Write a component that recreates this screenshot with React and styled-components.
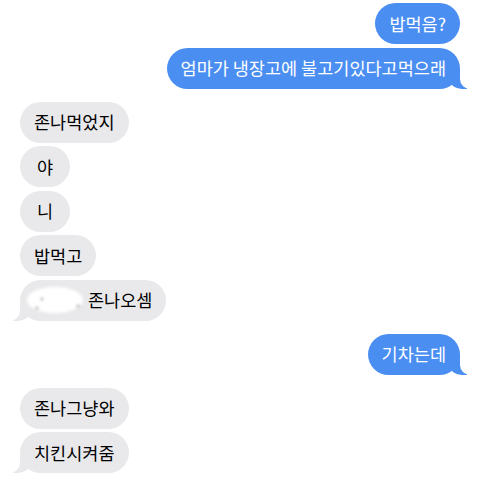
import styled, { createGlobalStyle, css } from "styled-components";

const GlobalStyle = createGlobalStyle`
  html, body {
    margin: 0;
    padding: 0;
    background: #ffffff;
  }
  body {
    font-family: "Noto Sans CJK KR", "Noto Sans", sans-serif;
  }
`;

const BLUE = "#4a8ef2";
const GRAY = "#e9e9eb";

const Thread = styled.div`
  width: 480px;
  height: 481px;
  box-sizing: border-box;
  padding: 3px 20px 0;
  display: flex;
  flex-direction: column;
  row-gap: 13px;
  overflow: hidden;
`;

const Group = styled.div`
  display: flex;
  flex-direction: column;
  align-items: ${(p) => (p.$mine ? "flex-end" : "flex-start")};
  row-gap: 3.5px;
`;

const tailMine = css`
  &::before {
    content: "";
    position: absolute;
    bottom: 0;
    right: -7px;
    width: 20px;
    height: 20px;
    background: ${BLUE};
    border-bottom-left-radius: 15px;
  }
  &::after {
    content: "";
    position: absolute;
    bottom: 0;
    right: -10px;
    width: 10px;
    height: 21px;
    background: #ffffff;
    border-bottom-left-radius: 10px;
  }
`;

const tailTheirs = css`
  &::before {
    content: "";
    position: absolute;
    bottom: 0;
    left: -7px;
    width: 20px;
    height: 20px;
    background: ${GRAY};
    border-bottom-right-radius: 15px;
  }
  &::after {
    content: "";
    position: absolute;
    bottom: 0;
    left: -10px;
    width: 10px;
    height: 21px;
    background: #ffffff;
    border-bottom-right-radius: 10px;
  }
`;

const Bubble = styled.div`
  position: relative;
  box-sizing: border-box;
  height: 41px;
  min-width: 50px;
  padding: 0 14px;
  border-radius: 21px;
  display: flex;
  align-items: center;
  justify-content: center;
  font-size: 17.5px;
  line-height: 1;
  white-space: nowrap;
  background: ${(p) => (p.$mine ? BLUE : GRAY)};
  color: ${(p) => (p.$mine ? "#ffffff" : "#000000")};
  ${(p) => p.$tail && (p.$mine ? tailMine : tailTheirs)}
`;

const Label = styled.span`
  position: relative;
  z-index: 1;
`;

const Redacted = styled.span`
  position: relative;
  z-index: 1;
  display: inline-block;
  width: 56px;
  height: 26px;
  margin-left: -7px;
  margin-right: 5px;
  border-radius: 50%;
  background: #ffffff;
  filter: blur(1.5px);
`;

const Speck = styled.i`
  position: absolute;
  width: 2px;
  height: 1.5px;
  border-radius: 1px;
  background: #555;
`;

function Message({ mine, tail, children }) {
  return (
    <Bubble $mine={mine} $tail={tail}>
      <Label>{children}</Label>
    </Bubble>
  );
}

export default function App() {
  return (
    <>
      <GlobalStyle />
      <Thread>
        <Group $mine>
          <Message mine>밥먹음?</Message>
          <Message mine tail>
            엄마가 냉장고에 불고기있다고먹으래
          </Message>
        </Group>
        <Group>
          <Message>존나먹었지</Message>
          <Message>야</Message>
          <Message>니</Message>
          <Message>밥먹고</Message>
          <Bubble $tail>
            <Redacted>
              <Speck style={{ left: 14, top: 11 }} />
              <Speck style={{ left: 9, top: 20 }} />
              <Speck style={{ left: 50, top: 18 }} />
            </Redacted>
            <Label>존나오셈</Label>
          </Bubble>
        </Group>
        <Group $mine>
          <Message mine tail>
            기차는데
          </Message>
        </Group>
        <Group>
          <Message>존나그냥와</Message>
          <Message tail>치킨시켜줌</Message>
        </Group>
      </Thread>
    </>
  );
}
